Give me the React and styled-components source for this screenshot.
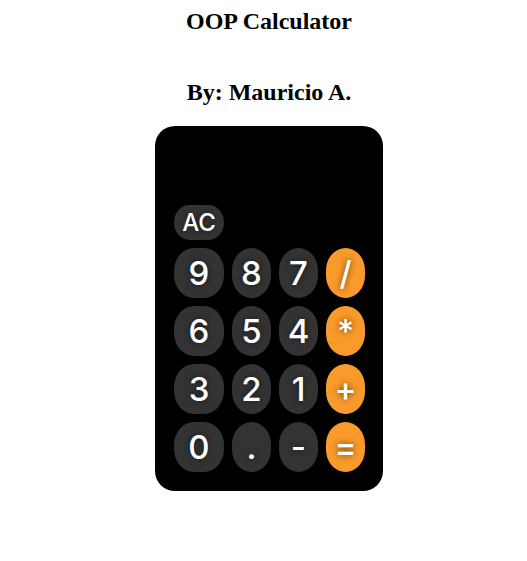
import React from "react";
import styled, { createGlobalStyle } from "styled-components";

const Global = createGlobalStyle`
  body {
    margin: 8px;
    background: #fff;
    font-family: "Liberation Serif", "Times New Roman", serif;
  }
  #root {
    width: 522px;
  }
`;

const Title = styled.h2`
  margin: 0 0 44px;
  font-size: 24px;
  font-weight: bold;
  text-align: center;
  color: #000;
`;

const Subtitle = styled.h2`
  margin: 0 0 20px;
  font-size: 24px;
  font-weight: bold;
  text-align: center;
  color: #000;
`;

const Calculator = styled.div`
  width: 228px;
  box-sizing: border-box;
  margin: 0 auto;
  padding: 0 18px 19px 19px;
  background: #000;
  border-radius: 20px;
  display: flex;
  flex-direction: column;
  gap: 8px;
`;

const Display = styled.div`
  height: 71px;
`;

const Keys = styled.div`
  display: grid;
  grid-template-columns: 50px 39px 39px 39px;
  grid-auto-rows: 50px;
  gap: 8px;
`;

const Key = styled.button`
  border: none;
  padding: 0;
  margin: 0;
  border-radius: 20px / 23px;
  background: ${(p) => (p.$op ? "#f99a2b" : "#333333")};
  color: #fff;
  font-family: Inter, "Liberation Sans", Arial, sans-serif;
  font-weight: 500;
  font-size: ${(p) => (p.$small ? "24px" : "33px")};
  width: ${(p) => (p.$small ? "50px" : "auto")};
  height: ${(p) => (p.$small ? "35px" : "auto")};
  display: flex;
  align-items: center;
  justify-content: center;
  text-shadow: 0 0 6px ${(p) => (p.$op ? "rgba(90,40,0,0.9)" : "rgba(0,0,0,0.6)")};
  cursor: pointer;
`;

const rows = [
  ["9", "8", "7", "/"],
  ["6", "5", "4", "*"],
  ["3", "2", "1", "+"],
  ["0", ".", "-", "="],
];

export default function App() {
  return (
    <>
      <Global />
      <Title>OOP Calculator</Title>
      <Subtitle>By: Mauricio A.</Subtitle>
      <Calculator>
        <Display />
        <Key $small>AC</Key>
        <Keys>
          {rows.flat().map((k, i) => (
            <Key key={i} $op={i % 4 === 3}>
              {k}
            </Key>
          ))}
        </Keys>
      </Calculator>
    </>
  );
}
